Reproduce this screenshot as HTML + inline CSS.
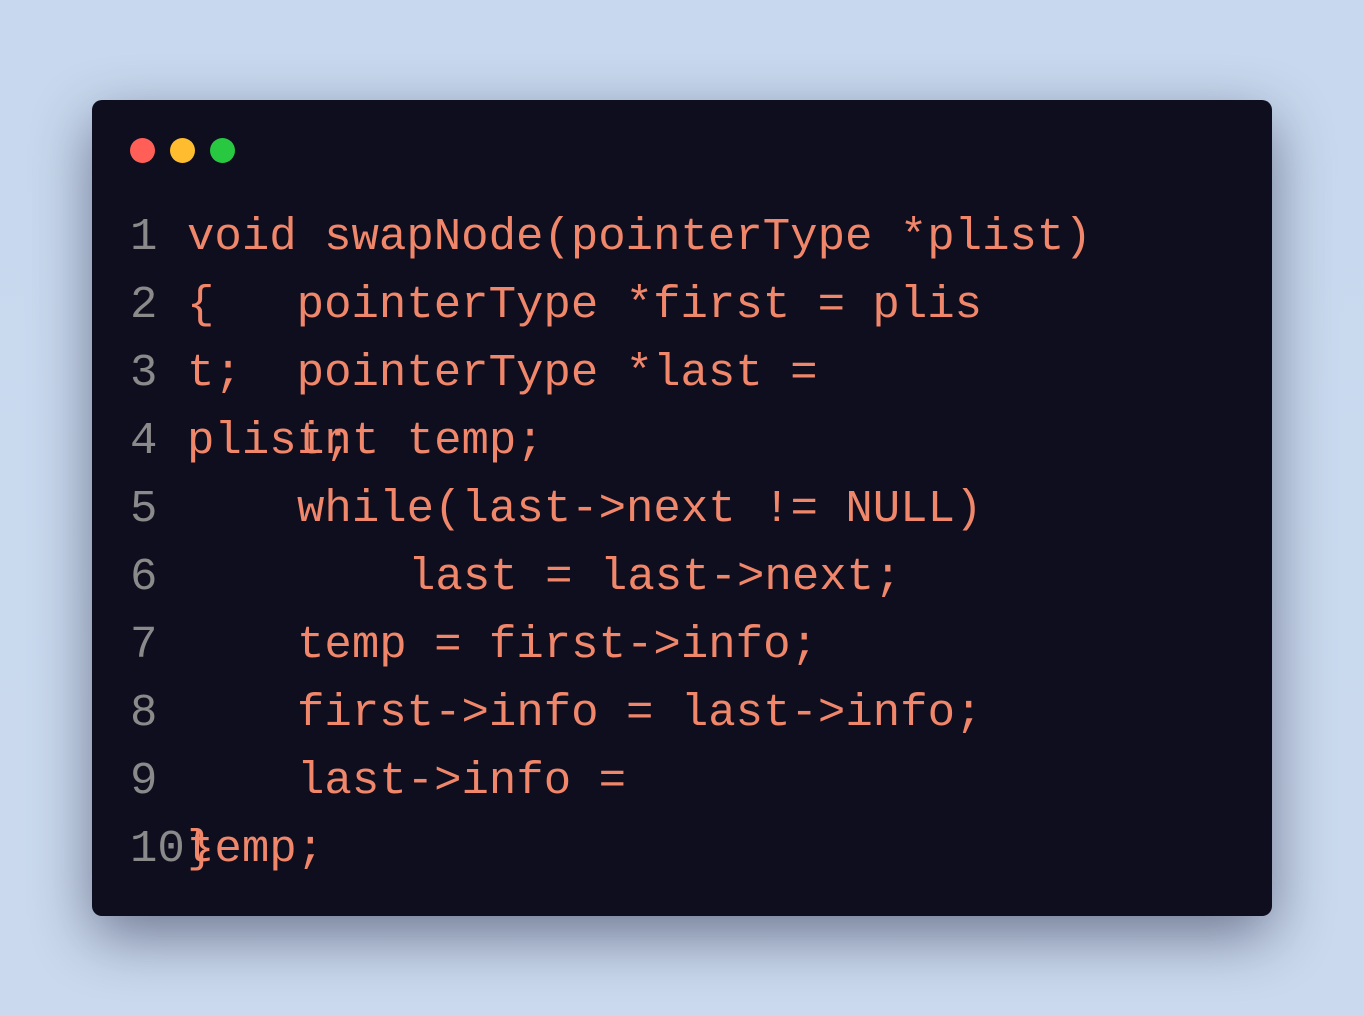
<!DOCTYPE html>
<html><head><style>
html,body{margin:0;padding:0;}
body{width:1364px;height:1016px;background:linear-gradient(180deg,#c8d9ef,#cad9ee);position:relative;overflow:hidden;font-family:"Liberation Mono",monospace;}
.card{position:absolute;left:92px;top:100px;width:1180px;height:816px;background:#0e0e1e;border-radius:10px;box-shadow:0 20px 60px rgba(0,0,30,0.45);}
.dot{position:absolute;top:138px;width:25px;height:25px;border-radius:50%;}
.t{position:absolute;font-size:45.7px;line-height:68px;height:68px;white-space:pre;color:#f0866a;}
.n{color:#8a8a8a;left:130px;}
</style></head><body>
<div class="card"></div>
<div class="dot" style="left:130px;background:#ff5f57"></div>
<div class="dot" style="left:170px;background:#febc2e"></div>
<div class="dot" style="left:210px;background:#28c840"></div>
<div class="t n" style="top:203px">1</div>
<div class="t n" style="top:271px">2</div>
<div class="t n" style="top:339px">3</div>
<div class="t n" style="top:407px">4</div>
<div class="t n" style="top:475px">5</div>
<div class="t n" style="top:543px">6</div>
<div class="t n" style="top:611px">7</div>
<div class="t n" style="top:679px">8</div>
<div class="t n" style="top:747px">9</div>
<div class="t n" style="top:815px">10</div>
<div class="t" style="left:187px;top:203px">void swapNode(pointerType *plist)</div>
<div class="t" style="left:187px;top:271px">{   pointerType *first = plis</div>
<div class="t" style="left:187px;top:339px">t;  pointerType *last =</div>
<div class="t" style="left:187px;top:407px">plist;</div>
<div class="t" style="left:297px;top:407px">int temp;</div>
<div class="t" style="left:297px;top:475px">while(last-&gt;next != NULL)</div>
<div class="t" style="left:408px;top:543px">last = last-&gt;next;</div>
<div class="t" style="left:297px;top:611px">temp = first-&gt;info;</div>
<div class="t" style="left:297px;top:679px">first-&gt;info = last-&gt;info;</div>
<div class="t" style="left:297px;top:747px">last-&gt;info =</div>
<div class="t" style="left:187px;top:815px">}</div>
<div class="t" style="left:187px;top:815px">temp;</div>
</body></html>
